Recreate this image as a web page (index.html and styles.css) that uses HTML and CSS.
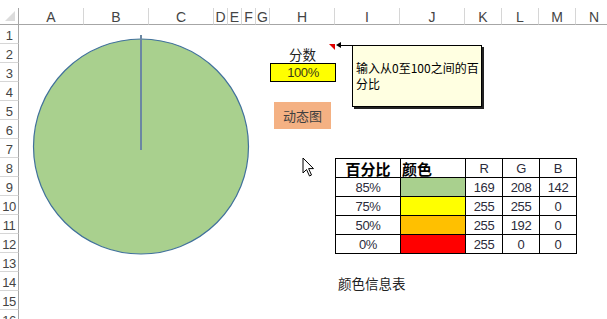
FILE: index.html
```html
<!DOCTYPE html>
<html lang="zh-CN">
    <head>
        <meta charset="UTF-8" />
        <title>分数动态图</title>
        <link rel="stylesheet" href="styles.css">
    </head>
    <body>
        <div class="sheet">
            <div class="corner"></div>
            <div class="col-head">A</div>
            <div class="col-head">B</div>
            <div class="col-head">C</div>
            <div class="col-head">D</div>
            <div class="col-head">E</div>
            <div class="col-head">F</div>
            <div class="col-head">G</div>
            <div class="col-head">H</div>
            <div class="col-head">I</div>
            <div class="col-head">J</div>
            <div class="col-head">K</div>
            <div class="col-head">L</div>
            <div class="col-head">M</div>
            <div class="col-head">N</div>

            <div class="score-label">分数<span class="note-mark"></span></div>
            <div class="score-value"><div class="score-box">100%</div></div>

            <div class="color-table">
                <div class="cell head-cn">百分比</div>
                <div class="cell head-cn left">颜色</div>
                <div class="cell">R</div>
                <div class="cell">G</div>
                <div class="cell">B</div>

                <div class="cell">85%</div>
                <div class="cell swatch green"></div>
                <div class="cell">169</div>
                <div class="cell">208</div>
                <div class="cell">142</div>

                <div class="cell">75%</div>
                <div class="cell swatch yellow"></div>
                <div class="cell">255</div>
                <div class="cell">255</div>
                <div class="cell">0</div>

                <div class="cell">50%</div>
                <div class="cell swatch orange"></div>
                <div class="cell">255</div>
                <div class="cell">192</div>
                <div class="cell">0</div>

                <div class="cell">0%</div>
                <div class="cell swatch red"></div>
                <div class="cell">255</div>
                <div class="cell">0</div>
                <div class="cell">0</div>
            </div>

            <div class="table-title">颜色信息表</div>

            <div class="row-head">1</div>
            <div class="row-head">2</div>
            <div class="row-head">3</div>
            <div class="row-head">4</div>
            <div class="row-head">5</div>
            <div class="row-head">6</div>
            <div class="row-head">7</div>
            <div class="row-head">8</div>
            <div class="row-head">9</div>
            <div class="row-head">10</div>
            <div class="row-head">11</div>
            <div class="row-head">12</div>
            <div class="row-head">13</div>
            <div class="row-head">14</div>
            <div class="row-head">15</div>
            <div class="row-head">16</div>

            <!-- floating objects -->
            <svg class="chart" width="222" height="226" viewBox="0 0 222 226">
                <circle cx="111" cy="114.5" r="107.5" fill="#a9d08e" stroke="#41719c" stroke-width="1.2" />
                <line x1="111" y1="3" x2="111" y2="118" stroke="#6b87a3" stroke-width="2" />
            </svg>

            <span class="comment-arrow"></span>
            <span class="comment-line"></span>
            <div class="comment">输入从0至100之间的百分比</div>

            <div class="chart-button">动态图</div>

            <svg class="cursor" width="14" height="21" viewBox="0 0 14 21">
                <path d="M1 1 L1 16 L4.5 12.5 L7.5 19 L9.5 18 L6.6 11.6 L11.5 11.6 Z" fill="#fff" stroke="#000" stroke-width="1" stroke-linejoin="miter" />
            </svg>
        </div>
    </body>
</html>
```

FILE: styles.css
```css
* {
    box-sizing: border-box;
}
body {
    margin: 0;
    background: #fff;
    width: 607px;
    height: 319px;
    overflow: hidden;
    font-family: "Liberation Sans", "Noto Sans CJK SC", sans-serif;
    color: #333;
}
.sheet {
    position: relative;
    display: grid;
    grid-template-columns: 19px 65px 65px 65px 14px 14px 14px 14px 65px 65px 65px 37px 37px 37px 37px;
    grid-template-rows: 17px repeat(16, 19px);
    padding-top: 8px;
    width: 640px;
}
.corner {
    position: relative;
    border-right: 1px solid #a6a6a6;
    border-bottom: 1px solid #a6a6a6;
}
.corner::after {
    content: "";
    position: absolute;
    right: 3px;
    bottom: 3px;
    border-style: solid;
    border-width: 0 0 10px 10px;
    border-color: transparent transparent #dcdcdc transparent;
}
.col-head {
    display: flex;
    justify-content: center;
    align-items: center;
    font-size: 14px;
    color: #444;
    border-right: 1px solid #d6d6d6;
    border-bottom: 1px solid #a6a6a6;
    padding-top: 1px;
}
.row-head {
    grid-column: 1;
    display: flex;
    justify-content: center;
    align-items: center;
    font-size: 13px;
    color: #444;
    border-right: 1px solid #a6a6a6;
    border-bottom: 1px solid #d6d6d6;
    letter-spacing: -0.5px;
    padding-top: 2px;
}

.score-label {
    grid-column: 9;
    grid-row: 3;
    position: relative;
    display: flex;
    justify-content: center;
    align-items: flex-end;
    font-family: "Noto Sans CJK SC", sans-serif;
    font-size: 13.5px;
    color: #222;
    line-height: 18px;
}
.note-mark {
    position: absolute;
    top: 0;
    right: 0;
    border-style: solid;
    border-width: 0 6px 6px 0;
    border-color: transparent #e00000 transparent transparent;
}
.score-value {
    grid-column: 9;
    grid-row: 4;
    margin-right: -1px;
}
.score-box {
    height: 100%;
    background: #ffff00;
    border: 1px solid #000;
    display: flex;
    justify-content: center;
    align-items: center;
    font-size: 13px;
    letter-spacing: -0.4px;
    color: #3a3a1a;
}

.color-table {
    grid-column: 10 / span 5;
    grid-row: 9 / span 5;
    align-self: start;
    justify-self: start;
    display: grid;
    grid-template-columns: 64px 64px 36px 36px 36px;
    grid-auto-rows: 18px;
    gap: 1px;
    border: 1px solid #000;
    background: #000;
}
.cell {
    background: #fff;
    display: flex;
    justify-content: center;
    align-items: center;
    font-size: 13px;
    letter-spacing: -0.4px;
    color: #2b2b3a;
    padding-top: 1px;
}
.head-cn {
    font-family: "Noto Sans CJK SC", sans-serif;
    font-weight: bold;
    font-size: 15px;
    letter-spacing: 0;
    color: #000;
    padding-top: 0;
}
.left {
    justify-content: flex-start;
    padding-left: 1px;
}
.swatch.green {
    background: #a9d08e;
}
.swatch.yellow {
    background: #ffff00;
}
.swatch.orange {
    background: #ffc000;
}
.swatch.red {
    background: #ff0000;
}

.table-title {
    grid-column: 10 / span 2;
    grid-row: 15;
    display: flex;
    align-items: center;
    padding-left: 3px;
    padding-top: 3px;
    font-family: "Noto Sans CJK SC", sans-serif;
    font-size: 13.5px;
    color: #222;
}

.chart {
    position: absolute;
    left: 30px;
    top: 32px;
}

.comment {
    position: absolute;
    left: 352px;
    top: 45px;
    width: 130px;
    height: 62px;
    background: #ffffe1;
    border: 1px solid #000;
    box-shadow: 2px 2px 0 #222;
    padding: 14px 2px 0 3px;
    font-family: "Noto Sans CJK SC", sans-serif;
    font-size: 12px;
    line-height: 16px;
    color: #000;
}
.comment-line {
    position: absolute;
    left: 339px;
    top: 45px;
    width: 14px;
    height: 1px;
    background: #000;
}
.comment-arrow {
    position: absolute;
    left: 336px;
    top: 42px;
    border-style: solid;
    border-width: 3px 5px 3px 0;
    border-color: transparent #000 transparent transparent;
}

.chart-button {
    position: absolute;
    left: 274px;
    top: 102px;
    width: 57px;
    height: 27px;
    background: #f4b183;
    display: flex;
    justify-content: center;
    align-items: center;
    font-family: "Noto Sans CJK SC", sans-serif;
    font-size: 13px;
    color: #404040;
}

.cursor {
    position: absolute;
    left: 302px;
    top: 157px;
}
```
